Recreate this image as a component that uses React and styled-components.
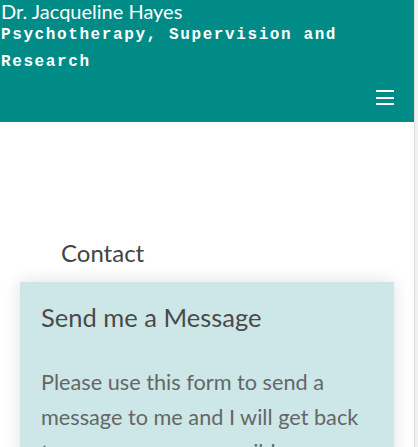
import React from "react";
import styled, { createGlobalStyle } from "styled-components";

const GlobalStyle = createGlobalStyle`
    html, body {
        margin: 0;
        padding: 0;
        background: #ffffff;
        overflow: hidden;
    }
    body {
        font-family: "Lato", "Open Sans", sans-serif;
    }
`;

const Page = styled.div`
    display: flex;
    height: 447px;
    overflow: hidden;`;

const Main = styled.div`
    width: 414px;
    flex-shrink: 0;
    display: flex;
    flex-direction: column;`;

const Gutter = styled.div`
    width: 3px;
    background: #f1f1f1;
    border-left: 1px solid #dcdcdc;`;

const Header = styled.header`
    background: #008b86;
    height: 122px;
    flex-shrink: 0;
    color: #ffffff;
    display: flex;
    flex-direction: column;`;

const SiteName = styled.div`
    font-family: "Lato", sans-serif;
    font-size: 20px;
    line-height: 22px;
    margin-left: 1px;`;

const Tagline = styled.div`
    font-family: "Liberation Mono", "DejaVu Sans Mono", monospace;
    font-size: 16px;
    font-weight: bold;
    letter-spacing: 1.6px;
    line-height: 27px;
    margin-left: 1px;`;

const MenuRow = styled.div`
    display: flex;
    justify-content: flex-end;
    padding-right: 20px;
    margin-top: 14px;`;

const Burger = styled.button`
    width: 18px;
    height: 15px;
    padding: 0;
    border: 0;
    background: transparent;
    display: flex;
    flex-direction: column;
    justify-content: space-between;
    span {
        display: block;
        height: 2px;
        background: #ffffff;
    }`;

const Content = styled.div`
    flex-shrink: 0;
    padding: 117px 20px 0 20px;`;

const PageTitle = styled.h1`
    margin: 0 0 15px 41px;
    font-family: "Lato", sans-serif;
    font-weight: normal;
    font-size: 24px;
    line-height: 28px;
    color: #444444;`;

const Card = styled.section`
    background: #cde7e8;
    box-shadow: 0 0 16px rgba(0, 0, 0, 0.13);
    padding: 20px 21px 0 21px;
    height: 300px;`;

const CardTitle = styled.h2`
    margin: 0 0 33px 0;
    font-family: "Lato", sans-serif;
    font-weight: normal;
    font-size: 25.5px;
    line-height: 30px;
    color: #4a4a4a;`;

const CardText = styled.p`
    margin: 0;
    font-family: "Lato", sans-serif;
    font-size: 21.7px;
    line-height: 35px;
    color: #666666;`;

export default function App() {
    return (
        <>
            <GlobalStyle />
            <Page>
                <Main>
                    <Header>
                        <SiteName>Dr. Jacqueline Hayes</SiteName>
                        <Tagline>Psychotherapy, Supervision and Research</Tagline>
                        <MenuRow>
                            <Burger aria-label="Menu">
                                <span />
                                <span />
                                <span />
                            </Burger>
                        </MenuRow>
                    </Header>
                    <Content>
                        <PageTitle>Contact</PageTitle>
                        <Card>
                            <CardTitle>Send me a Message</CardTitle>
                            <CardText>
                                Please use this form to send a message to me and I will get back to you as soon as possible
                            </CardText>
                        </Card>
                    </Content>
                </Main>
                <Gutter />
            </Page>
        </>
    );
}
